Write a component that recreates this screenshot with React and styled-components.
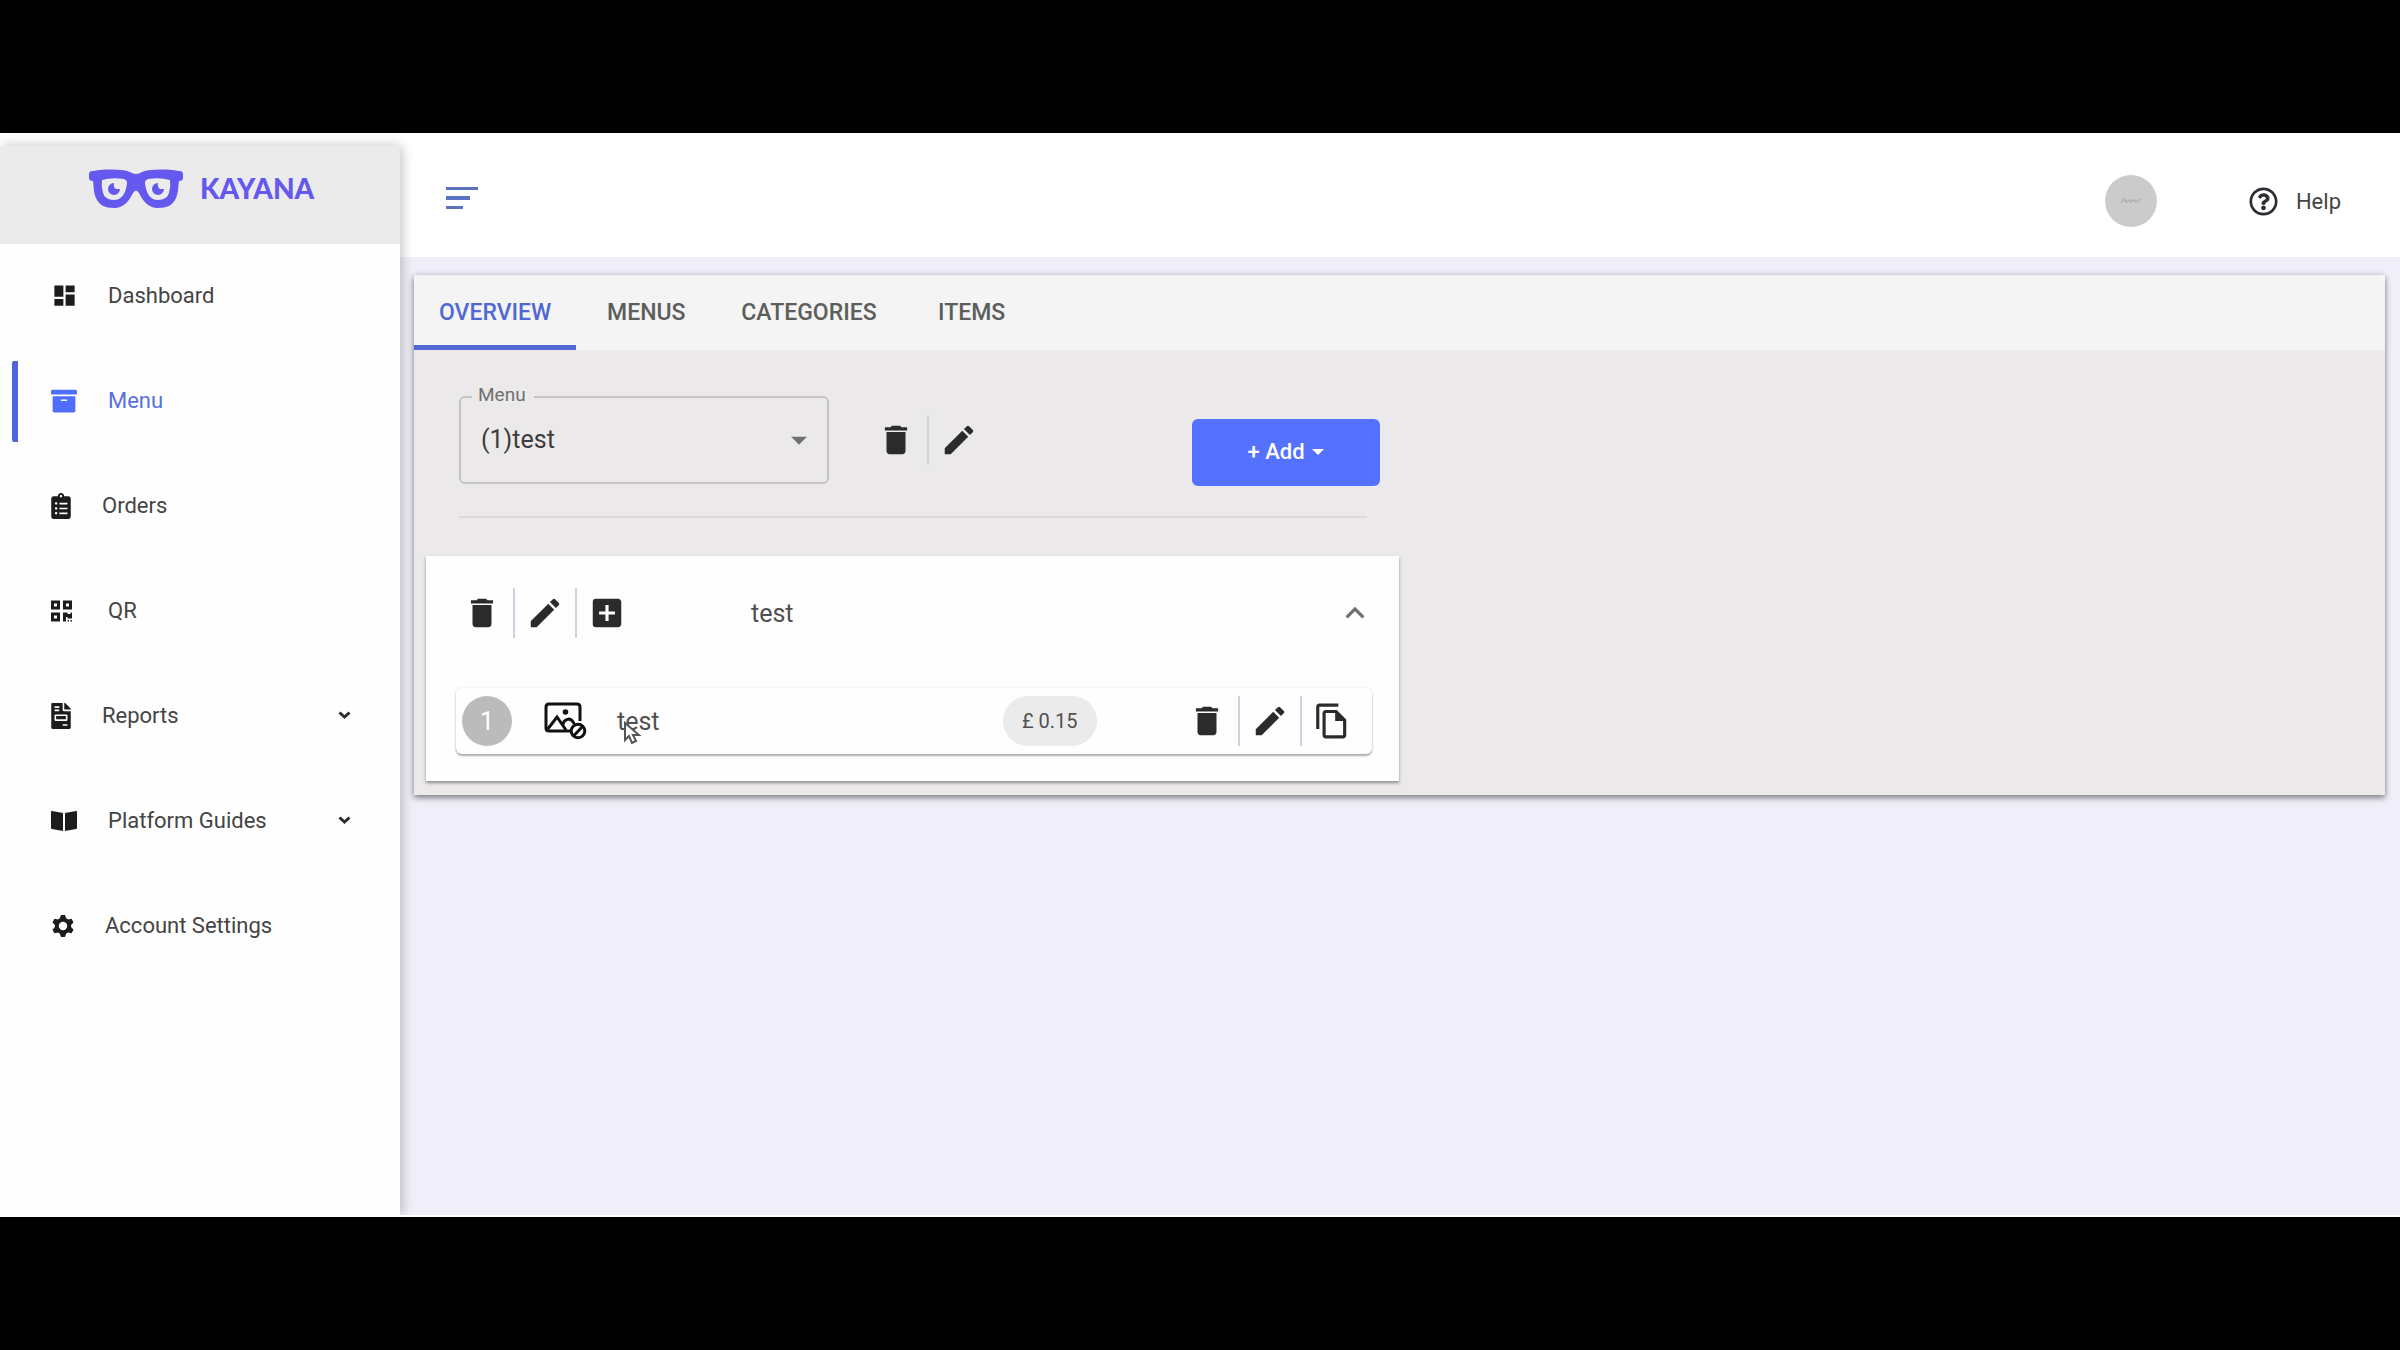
import React from "react";
import styled, { createGlobalStyle, css } from "styled-components";
import {
  MdDashboard,
  MdDelete,
  MdEdit,
  MdAddBox,
  MdOutlineFileCopy,
  MdExpandLess,
  MdArrowDropDown,
} from "react-icons/md";
import {
  FaArchive,
  FaClipboardList,
  FaQrcode,
  FaFileInvoice,
  FaRegQuestionCircle,
} from "react-icons/fa";

const GlobalStyle = createGlobalStyle`
  *, *::before, *::after { box-sizing: border-box; }
  body {
    margin: 0;
    background: #000;
    color: #444;
    font-family: Roboto, "Liberation Sans", sans-serif;
    font-size: 22px;
  }
  button, select { font: inherit; color: inherit; }
`;

const Screen = styled.div`
  min-height: 100vh;
  display: flex;
  padding: 133px 0;
  background: #000;
`;

const Shell = styled.div`
  flex: 1;
  display: grid;
  grid-template-columns: 400px 1fr;
  background: linear-gradient(#fff 124px, #f0eff9 124px);
  border-bottom: 2px solid #fff;
  overflow: hidden;
`;

const Sidebar = styled.aside`
  margin-top: 13px;
  background: #fefefe;
  box-shadow: 2px 0 12px rgba(0, 0, 0, 0.24);
`;

const Brand = styled.a`
  display: flex;
  align-items: center;
  gap: 16px;
  height: 98px;
  padding: 0 0 10px 88px;
  background: #ebebeb;
  color: #6558ee;
  text-decoration: none;
`;

const BrandName = styled.span`
  padding-bottom: 4px;
  font-family: Lato, sans-serif;
  font-weight: 900;
  font-size: 28px;
  line-height: 32px;
`;

const Nav = styled.nav`
  display: flex;
  flex-direction: column;
  gap: 24px;
  padding-top: 12px;
`;

const NavLink = styled.a`
  display: flex;
  align-items: center;
  height: 81px;
  margin-left: 12px;
  padding: 0 49px 2px 33px;
  border-left: 6px solid transparent;
  border-radius: 2px;
  color: #444;
  text-decoration: none;
  ${(p) =>
    p.$active &&
    css`
      color: #5871dc;
      border-color: #5064dc;
    `}
`;

const NavIcon = styled.span`
  display: flex;
  width: ${(p) => p.$width}px;
  margin-right: 31px;
  color: ${(p) => (p.$active ? "#4f6dff" : "#1c1c1c")};
  svg { flex: none; }
`;

const narrowIcon = css`
  && {
    width: 20px;
    height: 26px;
  }
`;

const OrdersIcon = styled(FaClipboardList)`
  ${narrowIcon}
`;

const ReportsIcon = styled(FaFileInvoice)`
  ${narrowIcon}
`;

const QrIcon = styled(FaQrcode)`
  && {
    width: 21px;
    height: 24px;
  }
`;

const NavText = styled.span`
  flex: 1;
  line-height: 28px;
`;

const Main = styled.main`
  min-width: 0;
`;

const TopBar = styled.header`
  display: flex;
  align-items: center;
  height: 124px;
  padding: 12px 59px 0 46px;
`;

const PlainButton = styled.button`
  display: flex;
  align-items: center;
  justify-content: center;
  padding: 0;
  border: 0;
  background: none;
  cursor: pointer;
`;

const MenuToggle = styled(PlainButton)`
  margin-right: auto;
  padding-bottom: 6px;
  color: #5a71c4;
`;

const Avatar = styled(PlainButton)`
  width: 52px;
  height: 52px;
  margin-right: 92px;
  border-radius: 50%;
  background: #cbcbcb;
  color: #b4b4b4;
`;

const HelpLink = styled.a`
  display: flex;
  align-items: center;
  gap: 18px;
  color: #444;
  text-decoration: none;
  svg { color: #2c2f33; }
`;

const Panel = styled.section`
  margin: 18px 15px 0 14px;
  background: #ebe9e9;
  box-shadow: 0 3px 6px rgba(0, 0, 0, 0.42), 0 0 6px rgba(0, 0, 0, 0.14);
`;

const Tabs = styled.div`
  display: flex;
  height: 75px;
  background: #f4f4f4;
`;

const Tab = styled.button`
  min-width: 140px;
  padding: 0 25px;
  border: 0;
  border-top: 5px solid transparent;
  border-bottom: 5px solid ${(p) => (p.$active ? "#5069d2" : "transparent")};
  background: none;
  color: ${(p) => (p.$active ? "#5069d2" : "#5c5e5c")};
  font-size: 23px;
  font-weight: 500;
  cursor: pointer;
`;

const Columns = styled.div`
  display: grid;
  grid-template-columns: 1fr 1fr;
  gap: 2px;
  padding-bottom: 14px;
`;

const Column = styled.div`
  padding-left: 12px;
`;

const Toolbar = styled.div`
  display: flex;
  align-items: center;
  padding: 43px 19px 30px 33px;
`;

const SelectField = styled.div`
  position: relative;
  width: 370px;
  margin-right: 36px;
`;

const SelectLabel = styled.label`
  position: absolute;
  top: -12px;
  left: 13px;
  padding: 0 8px 0 6px;
  background: #ebe9e9;
  color: #707070;
  font-size: 19px;
  line-height: 22px;
`;

const Select = styled.select`
  appearance: none;
  display: block;
  width: 100%;
  height: 88px;
  padding: 0 60px 0 20px;
  border: 2px solid #c5c3c3;
  border-radius: 6px;
  background: transparent;
  color: #3c3c3c;
  font-size: 25px;
`;

const SelectArrow = styled(MdArrowDropDown)`
  position: absolute;
  top: 25px;
  right: 11px;
  color: #707070;
  pointer-events: none;
`;

const Actions = styled.div`
  display: flex;
`;

const Action = styled(PlainButton)`
  width: 62px;
  height: 50px;
  color: #2b2b2b;
  & + & {
    border-left: 2px solid #cdd3e0;
  }
`;

const AddButton = styled.button`
  display: flex;
  align-items: center;
  justify-content: center;
  gap: 7px;
  width: 188px;
  height: 67px;
  margin: 26px 0 0 auto;
  padding-bottom: 3px;
  border: 0;
  border-radius: 6px;
  background: #5472ff;
  color: #fff;
  font-size: 22px;
  font-weight: 500;
  cursor: pointer;
`;

const Divider = styled.hr`
  margin: 0 32px 38px 33px;
  border: 0;
  border-top: 2px solid #dbd9d9;
`;

const Card = styled.article`
  padding-bottom: 27px;
  background: #fefefe;
  box-shadow: 0 2px 3px rgba(0, 0, 0, 0.4);
`;

const CardHeader = styled.header`
  display: flex;
  align-items: center;
  height: 114px;
  padding: 0 25px;
`;

const CardTitle = styled.h2`
  flex: 1;
  margin: 0 0 0 114px;
  color: #505050;
  font-size: 25px;
  font-weight: 400;
`;

const Collapse = styled(PlainButton)`
  width: 38px;
  height: 38px;
  color: #707070;
`;

const ItemRow = styled.div`
  display: flex;
  align-items: center;
  height: 66px;
  margin: 18px 27px 0 30px;
  padding: 0 10px 0 6px;
  border-radius: 6px;
  background: #fefefe;
  box-shadow: 0 2px 2px rgba(0, 0, 0, 0.3), 0 0 3px rgba(0, 0, 0, 0.1);
`;

const Position = styled.span`
  display: flex;
  align-items: center;
  justify-content: center;
  width: 50px;
  height: 50px;
  margin-right: 32px;
  border-radius: 50%;
  background: #bbb;
  color: #fff;
  font-size: 25px;
`;

const ItemName = styled.span`
  position: relative;
  margin: 0 auto 0 30px;
  color: #505050;
  font-size: 25px;
`;

const Pointer = styled.svg`
  position: absolute;
  top: 14px;
  left: 6px;
`;

const Price = styled.span`
  display: flex;
  align-items: center;
  height: 50px;
  margin-right: 79px;
  padding: 0 19px;
  border-radius: 25px;
  background: #ebebeb;
  color: #505050;
  font-size: 20px;
`;

function GlassesLogo() {
  return (
    <svg width="96" height="42" viewBox="0 0 96 42" aria-hidden="true">
      <path
        fill="currentColor"
        fillRule="evenodd"
        d="M1 5C1 3 2 2 5 2C18 0 34 0 42 3Q48 7 54 3C62 0 78 0 91 2C94 2 95 3 95 5V9Q95 12 91 12C90 17 91 22 88 29C85 36 79 39 70 39C60 39 55 32 51 24Q48 19 45 24C41 32 36 39 26 39C17 39 11 36 8 29C5 22 6 17 5 12Q1 12 1 9ZM14 11Q13 17 15 24Q17 31 26 31C34 31 38 24 39 14Q39 11 36 10Q24 8 14 11ZM60 10Q57 11 57 14C58 24 62 31 70 31Q79 31 81 24Q83 17 82 11Q72 8 60 10Z"
      />
      <path
        fill="currentColor"
        d="M26 14A6 6 0 1 0 32 20L28 20Q25 18 26 14ZM70 14A6 6 0 1 0 76 20L72 20Q69 18 70 14Z"
      />
    </svg>
  );
}

function OpenBook() {
  return (
    <svg width="26" height="20" viewBox="0 0 26 20" fill="currentColor" aria-hidden="true">
      <path d="M0 1Q0 0 1 0L12 2V20L1 18Q0 18 0 17ZM14 2L25 0Q26 0 26 1V17Q26 18 25 18L14 20Z" />
    </svg>
  );
}

function Gear() {
  return (
    <svg width="23" height="22" viewBox="-12 -11 23 22" aria-hidden="true">
      <circle r="6.2" fill="none" stroke="currentColor" strokeWidth="4" />
      <g fill="currentColor">
        {[0, 60, 120, 180, 240, 300].map((angle) => (
          <path key={angle} transform={`rotate(${angle})`} d="M-2 -11H2L3.6 -6.5H-3.6Z" />
        ))}
      </g>
    </svg>
  );
}

function Caret() {
  return (
    <svg width="13" height="9" viewBox="0 0 13 9" fill="none" stroke="#2c2c2c" strokeWidth="3" aria-hidden="true">
      <path d="M1.5 1.5L6.5 6L11.5 1.5" />
    </svg>
  );
}

function MenuLines() {
  return (
    <svg width="32" height="22" viewBox="0 0 32 22" fill="currentColor" aria-hidden="true">
      <path d="M0 0H32V3H0ZM0 9H24V13H0ZM0 19H17V22H0Z" />
    </svg>
  );
}

function AvatarMark() {
  return (
    <svg width="22" height="6" viewBox="0 0 22 6" fill="none" stroke="currentColor" strokeWidth="2" aria-hidden="true">
      <path d="M1 5L4 1L6 4L9 2L11 4L14 2L16 4L21 1" />
    </svg>
  );
}

function NoImage() {
  return (
    <svg width="43" height="38" viewBox="0 0 43 38" fill="none" stroke="#111" strokeWidth="3" aria-hidden="true">
      <path d="M27 29H5Q2 29 2 26V5Q2 2 5 2H33Q36 2 36 5V19" />
      <path d="M3 28L13 15L22 28M19 23Q19 18 25 17Q29 18 30 22" />
      <circle cx="21.5" cy="10" r="2.8" fill="#111" stroke="none" />
      <circle cx="34" cy="29" r="6.8" />
      <path d="M29.5 34L39 24" />
    </svg>
  );
}

const navItems = [
  { label: "Dashboard", icon: <MdDashboard size={27} />, width: 26 },
  { label: "Menu", icon: <FaArchive size={26} />, width: 26, active: true },
  { label: "Orders", icon: <OrdersIcon />, width: 20 },
  { label: "QR", icon: <QrIcon />, width: 26 },
  { label: "Reports", icon: <ReportsIcon />, width: 20, expands: true },
  { label: "Platform Guides", icon: <OpenBook />, width: 26, expands: true },
  { label: "Account Settings", icon: <Gear />, width: 23 },
];

const tabs = ["OVERVIEW", "MENUS", "CATEGORIES", "ITEMS"];

function DeleteAction() {
  return (
    <Action type="button" aria-label="Delete">
      <MdDelete size={38} />
    </Action>
  );
}

function EditAction() {
  return (
    <Action type="button" aria-label="Edit">
      <MdEdit size={38} />
    </Action>
  );
}

export default function App() {
  return (
    <Screen>
      <GlobalStyle />
      <Shell>
        <Sidebar>
          <Brand href="#home">
            <GlassesLogo />
            <BrandName>KAYANA</BrandName>
          </Brand>
          <Nav>
            {navItems.map((item) => (
              <NavLink key={item.label} href="#nav" $active={item.active}>
                <NavIcon $width={item.width} $active={item.active}>
                  {item.icon}
                </NavIcon>
                <NavText>{item.label}</NavText>
                {item.expands && <Caret />}
              </NavLink>
            ))}
          </Nav>
        </Sidebar>
        <Main>
          <TopBar>
            <MenuToggle type="button" aria-label="Toggle navigation">
              <MenuLines />
            </MenuToggle>
            <Avatar type="button" aria-label="Account">
              <AvatarMark />
            </Avatar>
            <HelpLink href="#help">
              <FaRegQuestionCircle size={29} />
              Help
            </HelpLink>
          </TopBar>
          <Panel>
            <Tabs role="tablist">
              {tabs.map((tab, i) => (
                <Tab key={tab} type="button" role="tab" aria-selected={i === 0} $active={i === 0}>
                  {tab}
                </Tab>
              ))}
            </Tabs>
            <Columns>
              <Column>
                <Toolbar>
                  <SelectField>
                    <SelectLabel htmlFor="menu">Menu</SelectLabel>
                    <Select id="menu" defaultValue="1">
                      <option value="1">(1)test</option>
                    </Select>
                    <SelectArrow size={38} />
                  </SelectField>
                  <Actions>
                    <DeleteAction />
                    <EditAction />
                  </Actions>
                  <AddButton type="button">
                    + Add
                    <svg width="12" height="6" viewBox="0 0 12 6" fill="#fff" aria-hidden="true">
                      <path d="M0 0H12L6 6Z" />
                    </svg>
                  </AddButton>
                </Toolbar>
                <Divider />
                <Card>
                  <CardHeader>
                    <Actions>
                      <DeleteAction />
                      <EditAction />
                      <Action type="button" aria-label="Add item">
                        <MdAddBox size={38} />
                      </Action>
                    </Actions>
                    <CardTitle>test</CardTitle>
                    <Collapse type="button" aria-label="Collapse">
                      <MdExpandLess size={38} />
                    </Collapse>
                  </CardHeader>
                  <ItemRow>
                    <Position>1</Position>
                    <NoImage />
                    <ItemName>
                      test
                      <Pointer width="18" height="24" viewBox="0 0 18 24" fill="#fff" stroke="#555" strokeWidth="2">
                        <path d="M2 2V19L6 15L9 22L13 20L10 14H16Z" />
                      </Pointer>
                    </ItemName>
                    <Price>£ 0.15</Price>
                    <Actions>
                      <DeleteAction />
                      <EditAction />
                      <Action type="button" aria-label="Duplicate">
                        <MdOutlineFileCopy size={38} />
                      </Action>
                    </Actions>
                  </ItemRow>
                </Card>
              </Column>
            </Columns>
          </Panel>
        </Main>
      </Shell>
    </Screen>
  );
}
